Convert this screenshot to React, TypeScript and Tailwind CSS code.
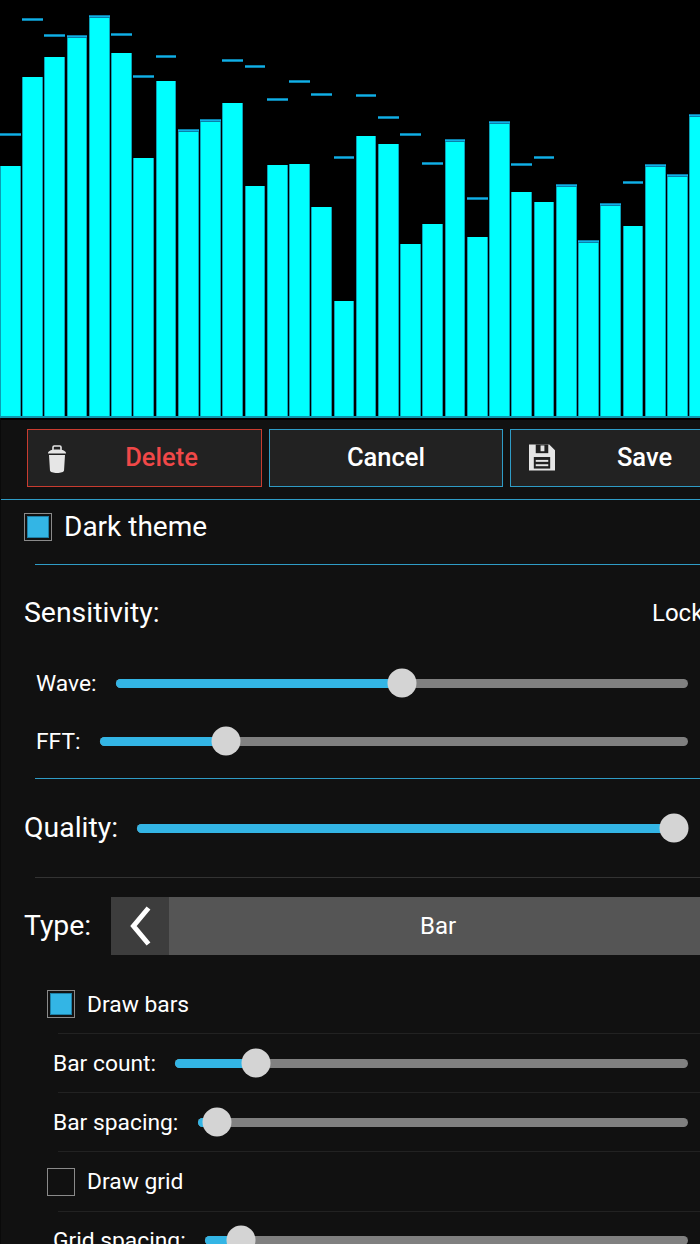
const bars = [
  [166, 134], [77, 19], [57, 35], [36, 36], [16, 16], [53, 34], [158, 76], [81, 56],
  [130, 130], [120, 120], [103, 60], [186, 66], [165, 99], [164, 81], [207, 94], [301, 157],
  [136, 95], [144, 117], [244, 134], [224, 163], [140, 140], [237, 198], [122, 122], [192, 164],
  [202, 157], [185, 185], [241, 241], [205, 204], [226, 182], [165, 165], [175, 175], [115, 115],
];

function TrashIcon() {
  return (
    <svg width="22" height="30" viewBox="0 0 22 30" className="shrink-0">
      <path d="M7 6V3.2C7 2.5 7.5 2 8.2 2h5.6c.7 0 1.2.5 1.2 1.2V6" fill="none" stroke="#e6e6e6" strokeWidth="1.6" />
      <path d="M2 9.5C2 7 5 5.5 11 5.5S20 7 20 9.5z" fill="#e6e6e6" />
      <path d="M3 11h16l-1 15.5c-.1 1.4-3 2.5-7 2.5s-6.900-1.100-7-2.500z" fill="#e6e6e6" />
    </svg>
  );
}

function SaveIcon() {
  return (
    <svg width="26" height="27" viewBox="0 0 27 27" className="shrink-0">
      <path d="M0 0h21l6 6v21H0z" fill="#e6e6e6" />
      <rect x="7" y="0" width="13" height="9" fill="#222" />
      <rect x="12" y="1" width="4" height="6" fill="#e6e6e6" />
      <rect x="5" y="13" width="17" height="12" fill="#222" />
      <rect x="7" y="16" width="13" height="2" fill="#e6e6e6" />
      <rect x="7" y="20.500" width="13" height="2" fill="#e6e6e6" />
    </svg>
  );
}

function ActionButton({ label, width, border, text, icon }: { label: string; width: string; border: string; text: string; icon?: React.ReactNode }) {
  return (
    <div className={`relative h-[58px] shrink-0 bg-[#222222] border pb-[2px] flex items-center justify-center font-medium text-[25.5px] ${width} ${border} ${text}`}>
      {icon && <div className="w-[34px] shrink-0" />}
      <span>{label}</span>
      {icon && <div className="absolute left-[18px] top-[14px]">{icon}</div>}
    </div>
  );
}

function Slider({ value }: { value: number }) {
  return (
    <div className="relative flex-1 h-[9px] rounded-full bg-[#808080]">
      <div className="h-full rounded-full bg-[#33b5e5]" style={{ width: `${value}%` }} />
      <div
        className="absolute top-1/2 w-[29px] h-[29px] -translate-x-1/2 -translate-y-1/2 rounded-full bg-[#d4d4d4]"
        style={{ left: `${value}%` }}
      />
    </div>
  );
}

function Checkbox({ checked }: { checked?: boolean }) {
  return (
    <div className="w-[28px] h-[28px] shrink-0 border border-[#8a8a8a] bg-[#111111] flex items-center justify-center">
      {checked && <div className="w-[22px] h-[22px] bg-[#33b5e5] border border-[#1f7fa5]" />}
    </div>
  );
}

function SubRow({ label, value, width, height = "h-[58px]" }: { label: string; value: number; width: string; height?: string }) {
  return (
    <div className={`flex items-center pl-[52px] pr-[12px] text-[22.8px] text-white ${height}`}>
      <span className={`shrink-0 whitespace-nowrap pt-[2px] ${width}`}>{label}</span>
      <Slider value={value} />
    </div>
  );
}

export default function App() {
  return (
    <div className="w-[700px] h-[1244px] overflow-hidden bg-[#111111] font-['Roboto',sans-serif]">
      {/* Visualizer */}
      <div className="h-[418px] bg-black overflow-hidden border-b-2 border-[#0f97ad]">
        <div className="w-[710px] h-[416px] flex items-end gap-[1.5px]">
          {bars.map(([top, peak], i) => (
            <div key={i} className="relative flex-1 h-full">
              <div
                className="absolute inset-x-0 bottom-0 bg-[#00ffff] border-x border-[#0b9fb4]"
                style={{ top }}
              />
              <div
                className="absolute inset-x-0 h-[3px] bg-[#10b0e8] border-y border-[#0b7fa8]"
                style={{ top: peak - 1 }}
              />
            </div>
          ))}
        </div>
      </div>

      <div className="w-[760px] border-l border-[#0a0a0a]">
        {/* Action bar */}
        <div className="h-[82px] flex items-center gap-[7px] pl-[26px] pb-[3px] border-t-2 border-t-black border-b border-b-[#2f9cc6]">
          <ActionButton label="Delete" width="w-[235px]" border="border-[#c93c30]" text="text-[#f04848]" icon={<TrashIcon />} />
          <ActionButton label="Cancel" width="w-[234px]" border="border-[#2f9cc6]" text="text-white" />
          <ActionButton label="Save" width="w-[235px]" border="border-[#2f9cc6]" text="text-white" icon={<SaveIcon />} />
        </div>

        <div className="w-[699px]">
          {/* Theme */}
          <div className="h-[56px] flex items-center gap-[12px] pl-[23px] pb-[2px] text-[28px] text-white">
            <Checkbox checked />
            <span>Dark theme</span>
          </div>
          <div className="h-px ml-[34px] bg-[#2f9cc6] mt-[8px]" />

          {/* Sensitivity */}
          <div className="h-[89px] pt-[7px] flex items-center justify-between pl-[23px] text-white">
            <span className="text-[28.4px]">Sensitivity:</span>
            <span className="text-[24px] w-[48px] whitespace-nowrap">Lock</span>
          </div>
          <div className="h-[58px] flex items-center pl-[35px] pr-[12px] text-[22.8px] text-white">
            <span className="w-[80px] shrink-0 pt-[2px]">Wave:</span>
            <Slider value={50} />
          </div>
          <div className="h-[58px] flex items-center pl-[35px] pr-[12px] text-[22.8px] text-white">
            <span className="w-[64px] shrink-0 pt-[2px]">FFT:</span>
            <Slider value={21.4} />
          </div>
          <div className="h-px ml-[34px] bg-[#2f9cc6] mt-[8px]" />

          {/* Quality */}
          <div className="h-[98px] flex items-center pl-[23px] pr-[12px] text-[28.4px] text-white">
            <span className="w-[113px] shrink-0">Quality:</span>
            <Slider value={97.4} />
          </div>
          <div className="h-px ml-[34px] bg-[#333333]" />
        </div>

        {/* Type */}
        <div className="h-[58px] mt-[19px] flex items-center pl-[23px] text-[28.4px] text-white">
          <span className="w-[87px] shrink-0">Type:</span>
          <div className="w-[58px] h-full shrink-0 bg-[#3d3d3d] flex items-center justify-center">
            <svg width="24" height="40" viewBox="0 0 24 40" fill="none" stroke="#ffffff" strokeWidth="5">
              <path d="M20.500 2 5.500 20l15 18" />
            </svg>
          </div>
          <div className="w-[538px] h-full shrink-0 bg-[#555555] flex items-center justify-center text-[24px]">Bar</div>
        </div>

        {/* Bar options */}
        <div className="w-[699px] mt-[20px]">
          <div className="h-[58px] flex items-center gap-[12px] pl-[46px] text-[22.8px] text-white">
            <Checkbox checked />
            <span className="pt-[2px]">Draw bars</span>
          </div>
          <div className="h-px ml-[57px] bg-[#222222]" />
          <SubRow label="Bar count:" value={15.8} width="w-[122px]" />
          <div className="h-px ml-[57px] bg-[#222222]" />
          <SubRow label="Bar spacing:" value={3.9} width="w-[145px]" />
          <div className="h-px ml-[57px] bg-[#222222]" />
          <div className="h-[59px] flex items-center gap-[12px] pl-[46px] text-[22.8px] text-white">
            <Checkbox />
            <span className="pt-[2px]">Draw grid</span>
          </div>
          <div className="h-px ml-[57px] bg-[#222222]" />
          <SubRow label="Grid spacing:" value={7.5} width="w-[152px]" height="h-[56px]" />
        </div>
      </div>
    </div>
  );
}
